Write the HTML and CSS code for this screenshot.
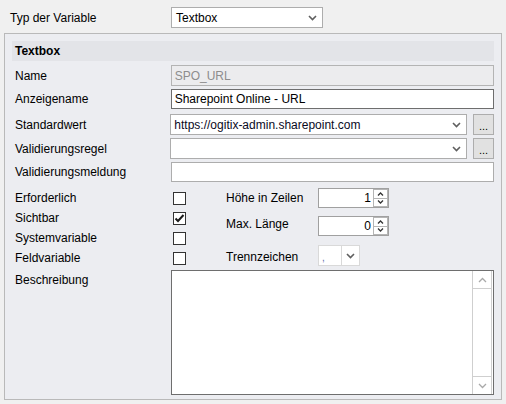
FILE: index.html
```html
<!DOCTYPE html>
<html>
<head>
<meta charset="utf-8"/>
<title>Typ der Variable</title>
<link rel="stylesheet" href="styles.css">
</head>
<body>
<div class="top-row">
    <div class="top-label">Typ der Variable</div>
    <div class="combo combo-type">
        <span class="combo-text">Textbox</span>
        <svg class="chev" width="9" height="6" viewBox="0 0 9 6"><polyline points="1,1 4.5,4.5 8,1"/></svg>
    </div>
</div>

<div class="group">
    <div class="group-head">Textbox</div>

    <div class="row row-name">
        <div class="lbl">Name</div>
        <div class="field field-disabled">SPO_URL</div>
    </div>
    <div class="row row-display">
        <div class="lbl">Anzeigename</div>
        <div class="field field-active">Sharepoint Online - URL</div>
    </div>
    <div class="row row-default">
        <div class="lbl">Standardwert</div>
        <div class="combo combo-wide">
            <span class="combo-text combo-url">https://ogitix-admin.sharepoint.com</span>
            <svg class="chev" width="9" height="6" viewBox="0 0 9 6"><polyline points="1,1 4.5,4.5 8,1"/></svg>
        </div>
        <div class="dots">...</div>
    </div>
    <div class="row row-rule">
        <div class="lbl">Validierungsregel</div>
        <div class="combo combo-wide">
            <span class="combo-text"></span>
            <svg class="chev" width="9" height="6" viewBox="0 0 9 6"><polyline points="1,1 4.5,4.5 8,1"/></svg>
        </div>
        <div class="dots">...</div>
    </div>
    <div class="row row-msg">
        <div class="lbl">Validierungsmeldung</div>
        <div class="field"></div>
    </div>

    <div class="options">
        <div class="opt-left">
            <div class="check-row">
                <div class="lbl">Erforderlich</div>
                <div class="check"></div>
            </div>
            <div class="check-row">
                <div class="lbl">Sichtbar</div>
                <div class="check">
                    <svg width="11" height="11" viewBox="0 0 11 11"><path d="M1.5 5.5 L4 8 L9.5 2"/></svg>
                </div>
            </div>
            <div class="check-row">
                <div class="lbl">Systemvariable</div>
                <div class="check"></div>
            </div>
            <div class="check-row">
                <div class="lbl">Feldvariable</div>
                <div class="check"></div>
            </div>
        </div>
        <div class="opt-right">
            <div class="spin-row spin-first">
                <div class="lbl-r">Höhe in Zeilen</div>
                <div class="spin">
                    <span class="spin-val">1</span>
                    <div class="spin-btns">
                        <div class="spin-btn"><svg width="7" height="4" viewBox="0 0 7 4"><polyline points="1,3.5 3.5,1 6,3.5"/></svg></div>
                        <div class="spin-btn"><svg width="7" height="4" viewBox="0 0 7 4"><polyline points="1,0.5 3.5,3 6,0.5"/></svg></div>
                    </div>
                </div>
            </div>
            <div class="spin-row spin-second">
                <div class="lbl-r">Max. Länge</div>
                <div class="spin">
                    <span class="spin-val">0</span>
                    <div class="spin-btns">
                        <div class="spin-btn"><svg width="7" height="4" viewBox="0 0 7 4"><polyline points="1,3.5 3.5,1 6,3.5"/></svg></div>
                        <div class="spin-btn"><svg width="7" height="4" viewBox="0 0 7 4"><polyline points="1,0.5 3.5,3 6,0.5"/></svg></div>
                    </div>
                </div>
            </div>
            <div class="spin-row spin-third">
                <div class="lbl-r">Trennzeichen</div>
                <div class="sep-combo">
                    <span class="sep-text">,</span>
                    <span class="sep-arrow"><svg class="chev" width="9" height="6" viewBox="0 0 9 6"><polyline points="1,1 4.5,4.5 8,1"/></svg></span>
                </div>
            </div>
        </div>
    </div>

    <div class="row row-desc">
        <div class="lbl lbl-desc">Beschreibung</div>
        <div class="memo">
            <div class="memo-bar">
                <div class="bar-btn"><svg width="9" height="6" viewBox="0 0 9 6"><polyline points="1,5 4.5,1.5 8,5"/></svg></div>
                <div class="bar-track"></div>
                <div class="bar-btn"><svg width="9" height="6" viewBox="0 0 9 6"><polyline points="1,1 4.5,4.5 8,1"/></svg></div>
            </div>
        </div>
    </div>
</div>
</body>
</html>
```

FILE: styles.css
```css
body {
    margin: 0;
    background-color: #f0f0f0;
    font-family: "Liberation Sans", Arial, sans-serif;
    font-size: 12px;
    color: #000;
    width: 506px;
    height: 404px;
    overflow: hidden;
}

.top-row {
    display: flex;
    align-items: center;
    padding: 7px 0 0 10px;
    height: 21px;
}
.top-label {
    width: 161px;
}

/* combo boxes */
.combo {
    display: flex;
    align-items: center;
    box-sizing: border-box;
    background-color: #fff;
    border: 1px solid #adadad;
    height: 21px;
}
.combo-type {
    width: 152px;
}
.combo-wide {
    width: 298px;
}
.combo-text {
    flex: 1;
    padding-left: 4px;
    white-space: nowrap;
    overflow: hidden;
}
.combo-url {
    padding-left: 3px;
    color: #0a0a1e;
}
.chev {
    margin-right: 5px;
}
.chev polyline, .bar-btn polyline {
    fill: none;
    stroke: #5f5f5f;
    stroke-width: 1.6;
}

/* group */
.group {
    box-sizing: border-box;
    margin: 5px 0 0 4px;
    width: 498px;
    height: 367px;
    border: 1px solid #b9b9b9;
    background-color: #ecedf1;
    padding: 7px 7px 0 7px;
}
.group-head {
    height: 20px;
    line-height: 20px;
    padding-left: 3px;
    background-color: #e3e4e8;
    font-weight: bold;
}

.row {
    display: flex;
    align-items: center;
}
.lbl {
    box-sizing: border-box;
    width: 159px;
    padding-left: 3px;
}
.row-name {
    margin-top: 4px;
    height: 21px;
}
.row-display {
    margin-top: 3px;
    height: 20px;
}
.row-default {
    margin-top: 5px;
    height: 21px;
}
.row-rule {
    margin-top: 3px;
    height: 21px;
}
.row-msg {
    margin-top: 3px;
    height: 20px;
}

.field {
    box-sizing: border-box;
    width: 324px;
    height: 100%;
    background-color: #fff;
    border: 1px solid #adadad;
    padding-left: 3px;
    display: flex;
    align-items: center;
}
.field-disabled {
    background-color: #ececee;
    border-color: #b4b4b4;
    color: #8d8d8d;
}
.field-active {
    border-color: #6e6e6e;
}

.dots {
    box-sizing: border-box;
    margin-left: 6px;
    width: 21px;
    height: 21px;
    border: 1px solid #adadad;
    background-color: #e1e1e1;
    text-align: center;
    line-height: 22px;
    font-size: 11px;
}

/* checkboxes and spinners */
.options {
    display: flex;
    margin-top: 6px;
}
.opt-left {
    width: 214px;
}
.check-row {
    display: flex;
    align-items: center;
    height: 20px;
}
.check {
    box-sizing: border-box;
    margin-left: 2px;
    width: 13px;
    height: 13px;
    border: 1px solid #333;
    background-color: #fff;
    display: flex;
    align-items: center;
    justify-content: center;
}
.check path {
    fill: none;
    stroke: #1a1a1a;
    stroke-width: 2;
}

.spin-row {
    display: flex;
    align-items: center;
}
.lbl-r {
    width: 92px;
}
.spin-first {
    height: 20px;
}
.spin-second {
    margin-top: 8px;
    height: 20px;
}
.spin-third {
    margin-top: 9px;
    height: 21px;
}
.spin-second .lbl-r {
    margin-top: -4px;
}
.spin-third .lbl-r {
    margin-top: 3px;
}
.spin {
    box-sizing: border-box;
    display: flex;
    width: 71px;
    height: 20px;
    border: 1px solid #a0a0a0;
    background-color: #fff;
}
.spin-val {
    flex: 1;
    text-align: right;
    padding-right: 2px;
    line-height: 18px;
}
.spin-btns {
    width: 15px;
    display: flex;
    flex-direction: column;
}
.spin-btn {
    flex: 1;
    box-sizing: border-box;
    border: 1px solid #b5b5b5;
    margin: 0 0 0 0;
    background-color: #fff;
    display: flex;
    align-items: center;
    justify-content: center;
}
.spin-btn + .spin-btn {
    border-top: none;
}
.spin-btn polyline {
    fill: none;
    stroke: #333;
    stroke-width: 1.3;
}

.sep-combo {
    box-sizing: border-box;
    display: flex;
    width: 42px;
    height: 21px;
    border: 1px solid #d9d9d9;
    background-color: #fff;
}
.sep-text {
    width: 23px;
    border-right: 1px solid #d9d9d9;
    color: #5a6fa8;
    font-size: 10px;
    line-height: 23px;
    padding-left: 3px;
    box-sizing: border-box;
}
.sep-arrow {
    flex: 1;
    display: flex;
    align-items: center;
    justify-content: center;
}
.sep-arrow .chev {
    margin: 0;
}

/* description */
.row-desc {
    margin-top: 2px;
    align-items: flex-start;
}
.lbl-desc {
    margin-top: 3px;
}
.memo {
    box-sizing: border-box;
    margin-left: 1px;
    width: 325px;
    height: 125px;
    border: 1px solid #6e6e6e;
    background-color: #fff;
    display: flex;
    justify-content: flex-end;
}
.memo-bar {
    width: 18px;
    margin-right: 1px;
    display: flex;
    flex-direction: column;
    border-left: 1px solid #cfcfcf;
    border-right: 1px solid #cfcfcf;
}
.bar-btn {
    height: 17px;
    display: flex;
    align-items: center;
    justify-content: center;
    border-bottom: 1px solid #cfcfcf;
}
.bar-btn + .bar-track + .bar-btn {
    border-bottom: none;
    border-top: 1px solid #cfcfcf;
}
.bar-track {
    flex: 1;
}
.bar-btn polyline {
    stroke: #a9a9a9;
    stroke-width: 1.3;
}
```
